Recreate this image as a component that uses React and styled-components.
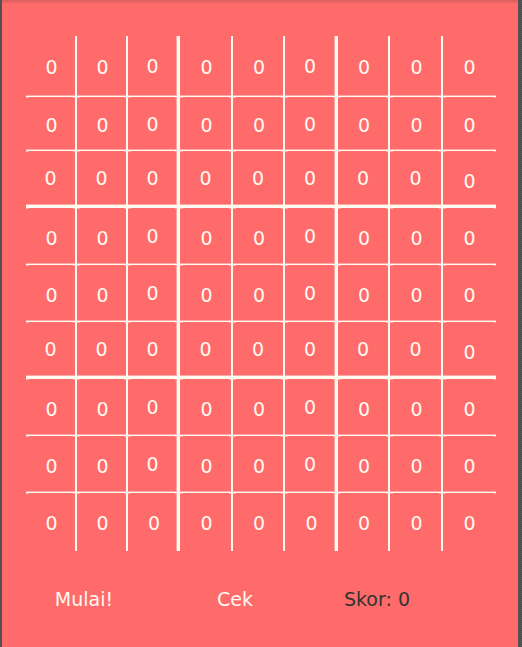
import React, { useState } from "react";
import styled, { createGlobalStyle, css } from "styled-components";

const coral = "#ff6b6b";
const line = "#fff9f0";
const faintLine = "#ffa9a5";

const GlobalStyle = createGlobalStyle`
  * { box-sizing: border-box; }
  body {
    margin: 0;
    background: repeating-conic-gradient(#474747 0 25%, #5c5c5c 0 50%) 0 0 / 2px 2px;
    font-family: "DejaVu Sans", sans-serif;
    font-size: 19px;
    line-height: 24px;
  }
`;

const Window = styled.main`
  min-height: 100vh;
  margin: 0 4px 0 2px;
  padding: 36px 22px 24px 24px;
  background: linear-gradient(#d95f5f, ${coral} 4px) ${coral};
`;

const Board = styled.div`
  display: grid;
  grid-template-columns: 51fr 51fr 52fr 53fr 52fr 53fr 52fr 53fr 53fr;
  grid-template-rows: 61px 54px repeat(6, 57px) 58px;
`;

const tick = `linear-gradient(${faintLine}, ${faintLine}) no-repeat`;

const Cell = styled.button`
  display: flex;
  align-items: center;
  justify-content: center;
  min-width: 0;
  padding: 2px 0 0 2px;
  border: 0 solid ${line};
  border-radius: 0;
  background: none;
  color: ${line};
  font: inherit;
  cursor: pointer;

  ${({ $row }) => $row > 0 && css`
    background: ${tick} left top / 3px 1px, ${tick} right top / 2px 1px;
  `}
  ${({ $row }) => $row > 2 && $row < 8 && css`
    padding-top: 4px;
  `}
  ${({ $row }) => $row < 8 && css`
    border-bottom-width: 1px;
    box-shadow: inset 0 -1px ${faintLine};
  `}
  ${({ $col }) => $col < 8 && css`
    border-right-width: 2px;
  `}
  ${({ $col }) => $col === 8 && css`
    padding-left: 0;
  `}
  ${({ $row, $col }) => $col % 3 === 2 && $col < 8 && css`
    border-right-width: 3px;
    box-shadow: inset -1px ${$row < 8 ? "-1px" : "0"} ${faintLine};
    padding: ${$row < 8 ? "0" : "2px 0 0 3px"};
  `}
  ${({ $row, $col }) => $row % 3 === 2 && $row < 8 && css`
    border-bottom-width: 3px;
    padding: ${$col < 8 ? "0" : "6px 0 0 0"};
  `}
`;

const Controls = styled.div`
  display: grid;
  grid-template-columns: 116fr 186fr 98fr 70fr;
  justify-items: center;
  margin-top: 36px;
`;

const Action = styled.button`
  padding: 0;
  border: 0;
  background: none;
  color: ${line};
  font: inherit;
  cursor: pointer;
`;

const Score = styled.output`
  color: #333333;
  white-space: nowrap;
`;

const emptyBoard = () => Array.from({ length: 81 }, () => 0);

export default function App() {
  const [cells, setCells] = useState(emptyBoard);
  const [score, setScore] = useState(0);

  const advance = (index) =>
    setCells((old) => old.map((n, i) => (i === index ? (n + 1) % 10 : n)));

  const restart = () => {
    setCells(emptyBoard());
    setScore(0);
  };

  const check = () => setScore(cells.filter(Boolean).length);

  return (
    <>
      <GlobalStyle />
      <Window>
        <Board>
          {cells.map((value, i) => (
            <Cell
              key={i}
              type="button"
              $row={Math.floor(i / 9)}
              $col={i % 9}
              onClick={() => advance(i)}
            >
              {value}
            </Cell>
          ))}
        </Board>
        <Controls>
          <Action type="button" onClick={restart}>Mulai!</Action>
          <Action type="button" onClick={check}>Cek</Action>
          <Score>Skor: {score}</Score>
        </Controls>
      </Window>
    </>
  );
}
